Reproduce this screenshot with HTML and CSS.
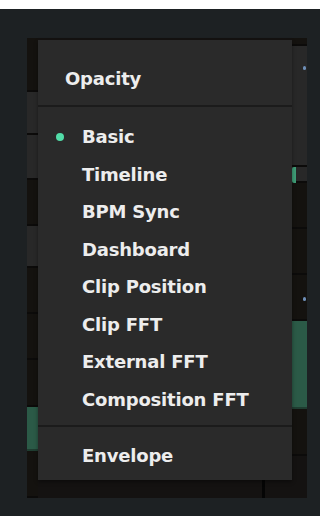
FILE: index.html
```html
<!DOCTYPE html>
<html lang="en">
<head>
    <meta charset="UTF-8">
    <meta name="viewport" content="width=device-width, initial-scale=1.0">
    <title>Opacity Menu</title>
    <link rel="stylesheet" href="styles.css">
</head>
<body>
    <div class="top-strip"></div>

    <div class="stage">
        <div class="panel">
            <div class="rail rail-left">
                <div class="cell dark" style="height: 54px"></div>
                <div class="cell gray" style="height: 43px"></div>
                <div class="cell gray" style="height: 45px"></div>
                <div class="cell dark" style="height: 46px"></div>
                <div class="cell gray" style="height: 42px"></div>
                <div class="cell dark" style="height: 46px"></div>
                <div class="cell dark" style="height: 46px"></div>
                <div class="cell dark" style="height: 47px"></div>
                <div class="cell green" style="height: 44px"></div>
                <div class="cell dark" style="height: 47px"></div>
            </div>

            <div class="rail rail-right">
                <div class="cell dark" style="height: 8px"></div>
                <div class="cell gray" style="height: 121px"><span class="blip blue"></span></div>
                <div class="cell gray" style="height: 16px"><span class="blip green-mark"></span></div>
                <div class="cell dark" style="height: 46px"></div>
                <div class="cell dark" style="height: 46px"></div>
                <div class="cell dark" style="height: 46px"><span class="blip blue low"></span></div>
                <div class="cell green" style="height: 88px"></div>
                <div class="cell dark" style="height: 47px"></div>
            </div>
            <div class="tick"></div>

            <div class="menu">
                <div class="menu-header">Opacity</div>
                <ul class="menu-list">
                    <li class="menu-item checked">Basic</li>
                    <li class="menu-item">Timeline</li>
                    <li class="menu-item">BPM Sync</li>
                    <li class="menu-item">Dashboard</li>
                    <li class="menu-item">Clip Position</li>
                    <li class="menu-item">Clip FFT</li>
                    <li class="menu-item">External FFT</li>
                    <li class="menu-item">Composition FFT</li>
                </ul>
                <ul class="menu-list menu-footer">
                    <li class="menu-item">Envelope</li>
                </ul>
            </div>
        </div>
    </div>
</body>
</html>
```

FILE: styles.css
```css
* {
    margin: 0;
    padding: 0;
    box-sizing: border-box;
}

html {
    background-color: #1d2123;
}

body {
    background: linear-gradient(#ffffff 0, #ffffff 9px, #1d2123 9px);
    font-family: 'DejaVu Sans', 'Liberation Sans', sans-serif;
    width: 320px;
    height: 516px;
    overflow: hidden;
}

.top-strip {
    display: block;
    height: 9px;
    background-color: #ffffff;
}

.stage {
    padding: 29px 13px 0 27px;
}

/* the clip grid behind the popup */
.panel {
    position: relative;
    width: 280px;
    height: 460px;
    background-color: #141211;
    display: flex;
    justify-content: space-between;
}

.rail {
    display: flex;
    flex-direction: column;
}

.rail-left {
    width: 11px;
}

.rail-right {
    width: 15px;
}

.cell {
    position: relative;
    border-bottom: 2px solid #0c0b0a;
}

.cell.dark {
    background-color: #14120f;
}

.cell.gray {
    background-color: #282828;
}

.cell.green {
    background-color: #2b5a47;
    border-bottom-color: #1f3d31;
}

.blip {
    position: absolute;
}

.blip.blue {
    right: 1px;
    top: 20px;
    width: 3px;
    height: 4px;
    border-radius: 2px;
    background-color: #6e8fb8;
}

.blip.blue.low {
    top: 22px;
}

.blip.green-mark {
    left: 0;
    top: 0;
    width: 4px;
    height: 16px;
    border-radius: 2px 0 0 2px;
    background-color: #3f9d77;
}

.tick {
    position: absolute;
    left: 235px;
    bottom: 0;
    width: 3px;
    height: 20px;
    background-color: #050505;
}

/* popup menu */
.menu {
    position: absolute;
    left: 11px;
    top: 2px;
    width: 254px;
    height: 440px;
    background-color: #2a2a2a;
    color: #ededed;
    font-size: 18px;
    font-weight: 700;
    letter-spacing: -0.2px;
    box-shadow: 0 2px 4px rgba(0, 0, 0, 0.4);
}

.menu-header {
    height: 67px;
    padding: 27px 0 0 27px;
    border-bottom: 2px solid #1b1b1b;
    line-height: 24px;
}

.menu-list {
    list-style: none;
    padding: 11px 0 7px;
}

.menu-footer {
    border-top: 2px solid #1b1b1b;
    padding: 10px 0 0;
}

.menu-item {
    position: relative;
    height: 37.5px;
    line-height: 37.5px;
    padding-left: 44px;
    white-space: nowrap;
}

.menu-item.checked::before {
    content: '';
    position: absolute;
    left: 18px;
    top: 15px;
    width: 8px;
    height: 8px;
    border-radius: 50%;
    background-color: #52dca8;
}
```
